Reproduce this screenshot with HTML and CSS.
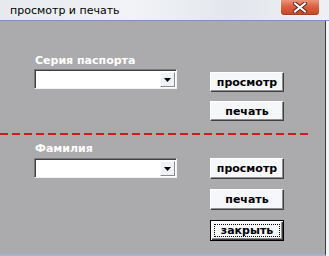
FILE: index.html
```html
<html>
  <head>
    <meta charset="utf-8">
    <link rel="stylesheet" href="styles.css">
  </head>
  <body>
    <div class="window">
      <div class="titlebar">
        <span class="title">просмотр и печать</span>
        <button class="close-btn">
          <svg width="14" height="11" viewBox="0 0 14 11">
            <path d="M2 1.5 L12 9.5 M12 1.5 L2 9.5" stroke="#5a2418" stroke-width="4" stroke-linecap="square" fill="none" />
            <path d="M2 1.5 L12 9.5 M12 1.5 L2 9.5" stroke="#ffffff" stroke-width="2" stroke-linecap="square" fill="none" />
          </svg>
        </button>
      </div>
      <div class="client">
        <div class="group group-top">
          <div class="field">
            <label class="field-label">Серия паспорта</label>
            <div class="combo">
              <span class="combo-text"></span>
              <span class="combo-arrow">
                <svg width="7" height="4" viewBox="0 0 7 4"><path d="M0 0 H7 L3.5 4 Z" fill="#000" /></svg>
              </span>
            </div>
          </div>
          <div class="buttons">
            <button class="btn">просмотр</button>
            <button class="btn">печать</button>
          </div>
        </div>
        <div class="separator"></div>
        <div class="group group-bottom">
          <div class="field">
            <label class="field-label">Фамилия</label>
            <div class="combo">
              <span class="combo-text"></span>
              <span class="combo-arrow">
                <svg width="7" height="4" viewBox="0 0 7 4"><path d="M0 0 H7 L3.5 4 Z" fill="#000" /></svg>
              </span>
            </div>
          </div>
          <div class="buttons">
            <button class="btn">просмотр</button>
            <button class="btn">печать</button>
            <button class="btn btn-default"><span class="focus">закрыть</span></button>
          </div>
        </div>
      </div>
    </div>
  </body>
</html>
```

FILE: styles.css
```css
html, body {
  margin: 0;
  padding: 0;
}
body {
  font-family: "DejaVu Sans", Verdana, sans-serif;
  font-size: 11px;
  background-color: #f2f3f6;
}
.window {
  width: 329px;
  height: 256px;
  display: flex;
  flex-direction: column;
  background-color: #f4f5f8;
}
.titlebar {
  height: 20px;
  display: flex;
  justify-content: space-between;
  align-items: flex-start;
  border-bottom: 1px solid #7c93bf;
  background: linear-gradient(to right, #e6e9ee, #f1f3f6 40%, #e3e7ed 70%, #eef0f4);
}
.title {
  padding-left: 10px;
  line-height: 20px;
  padding-top: 1px;
  color: #000;
}
.close-btn {
  width: 40px;
  height: 16px;
  margin-right: 9px;
  padding: 0;
  border: 1px solid #f7f2f0;
  border-top: none;
  border-radius: 0 0 4px 4px;
  background: linear-gradient(#e9957c, #d9603f 45%, #c8452a);
  box-shadow: inset 0 -1px 0 #a83a22;
  display: flex;
  justify-content: center;
  align-items: center;
}
.client {
  flex: 1;
  width: 325px;
  background-color: #ababad;
  border-right: 1px solid #3c3c3c;
  border-bottom: 2px solid #a4b4d4;
}
.group {
  display: flex;
  padding-left: 34px;
}
.field {
  width: 176px;
  display: flex;
  flex-direction: column;
}
.group-top .field {
  padding-top: 33px;
}
.group-bottom .field {
  padding-top: 7px;
}
.field-label {
  color: #fff;
  font-weight: bold;
  line-height: 13px;
  height: 13px;
  margin-bottom: 2px;
  padding-left: 1px;
}
.group-bottom .field-label {
  margin-bottom: 3px;
}
.combo {
  width: 143px;
  height: 20px;
  box-sizing: border-box;
  background-color: #fff;
  border: 1px solid;
  border-color: #7a7a7a #f2f2f2 #f2f2f2 #7a7a7a;
  box-shadow: inset 1px 1px 0 #404040;
  display: flex;
  justify-content: flex-end;
  align-items: stretch;
  padding: 2px 1px 1px 2px;
}
.combo-text {
  flex: 1;
}
.combo-arrow {
  width: 15px;
  box-sizing: border-box;
  background-color: #eef1f6;
  border: 1px solid;
  border-color: #fafbfd #8c8c8c #8c8c8c #fafbfd;
  display: flex;
  justify-content: center;
  align-items: center;
}
.buttons {
  width: 74px;
  display: flex;
  flex-direction: column;
}
.group-top .buttons {
  padding-top: 51px;
  gap: 9px;
}
.group-bottom .buttons {
  padding-top: 23px;
  gap: 10px;
}
.btn {
  height: 20px;
  padding: 0;
  box-sizing: border-box;
  font-family: "DejaVu Sans", Verdana, sans-serif;
  font-size: 11px;
  font-weight: bold;
  color: #000;
  background-color: #f5f7fb;
  border: 1px solid;
  border-color: #ffffff #404040 #404040 #ffffff;
  box-shadow: inset -1px -1px 0 #8e8e8e;
}
.group-bottom .btn {
  height: 21px;
}
.btn-default {
  border: 1px solid #000;
  box-shadow: inset 1px 1px 0 #fff, inset -1px -1px 0 #404040, inset -2px -2px 0 #8e8e8e;
  display: flex;
  padding: 3px;
}
.btn-default .focus {
  flex: 1;
  border: 1px dotted #000;
  display: flex;
  justify-content: center;
  align-items: center;
}
.separator {
  height: 2px;
  width: 311px;
  margin-top: 12px;
  background: repeating-linear-gradient(to right, #cc1c1c 0 8px, transparent 8px 12px);
}
```
